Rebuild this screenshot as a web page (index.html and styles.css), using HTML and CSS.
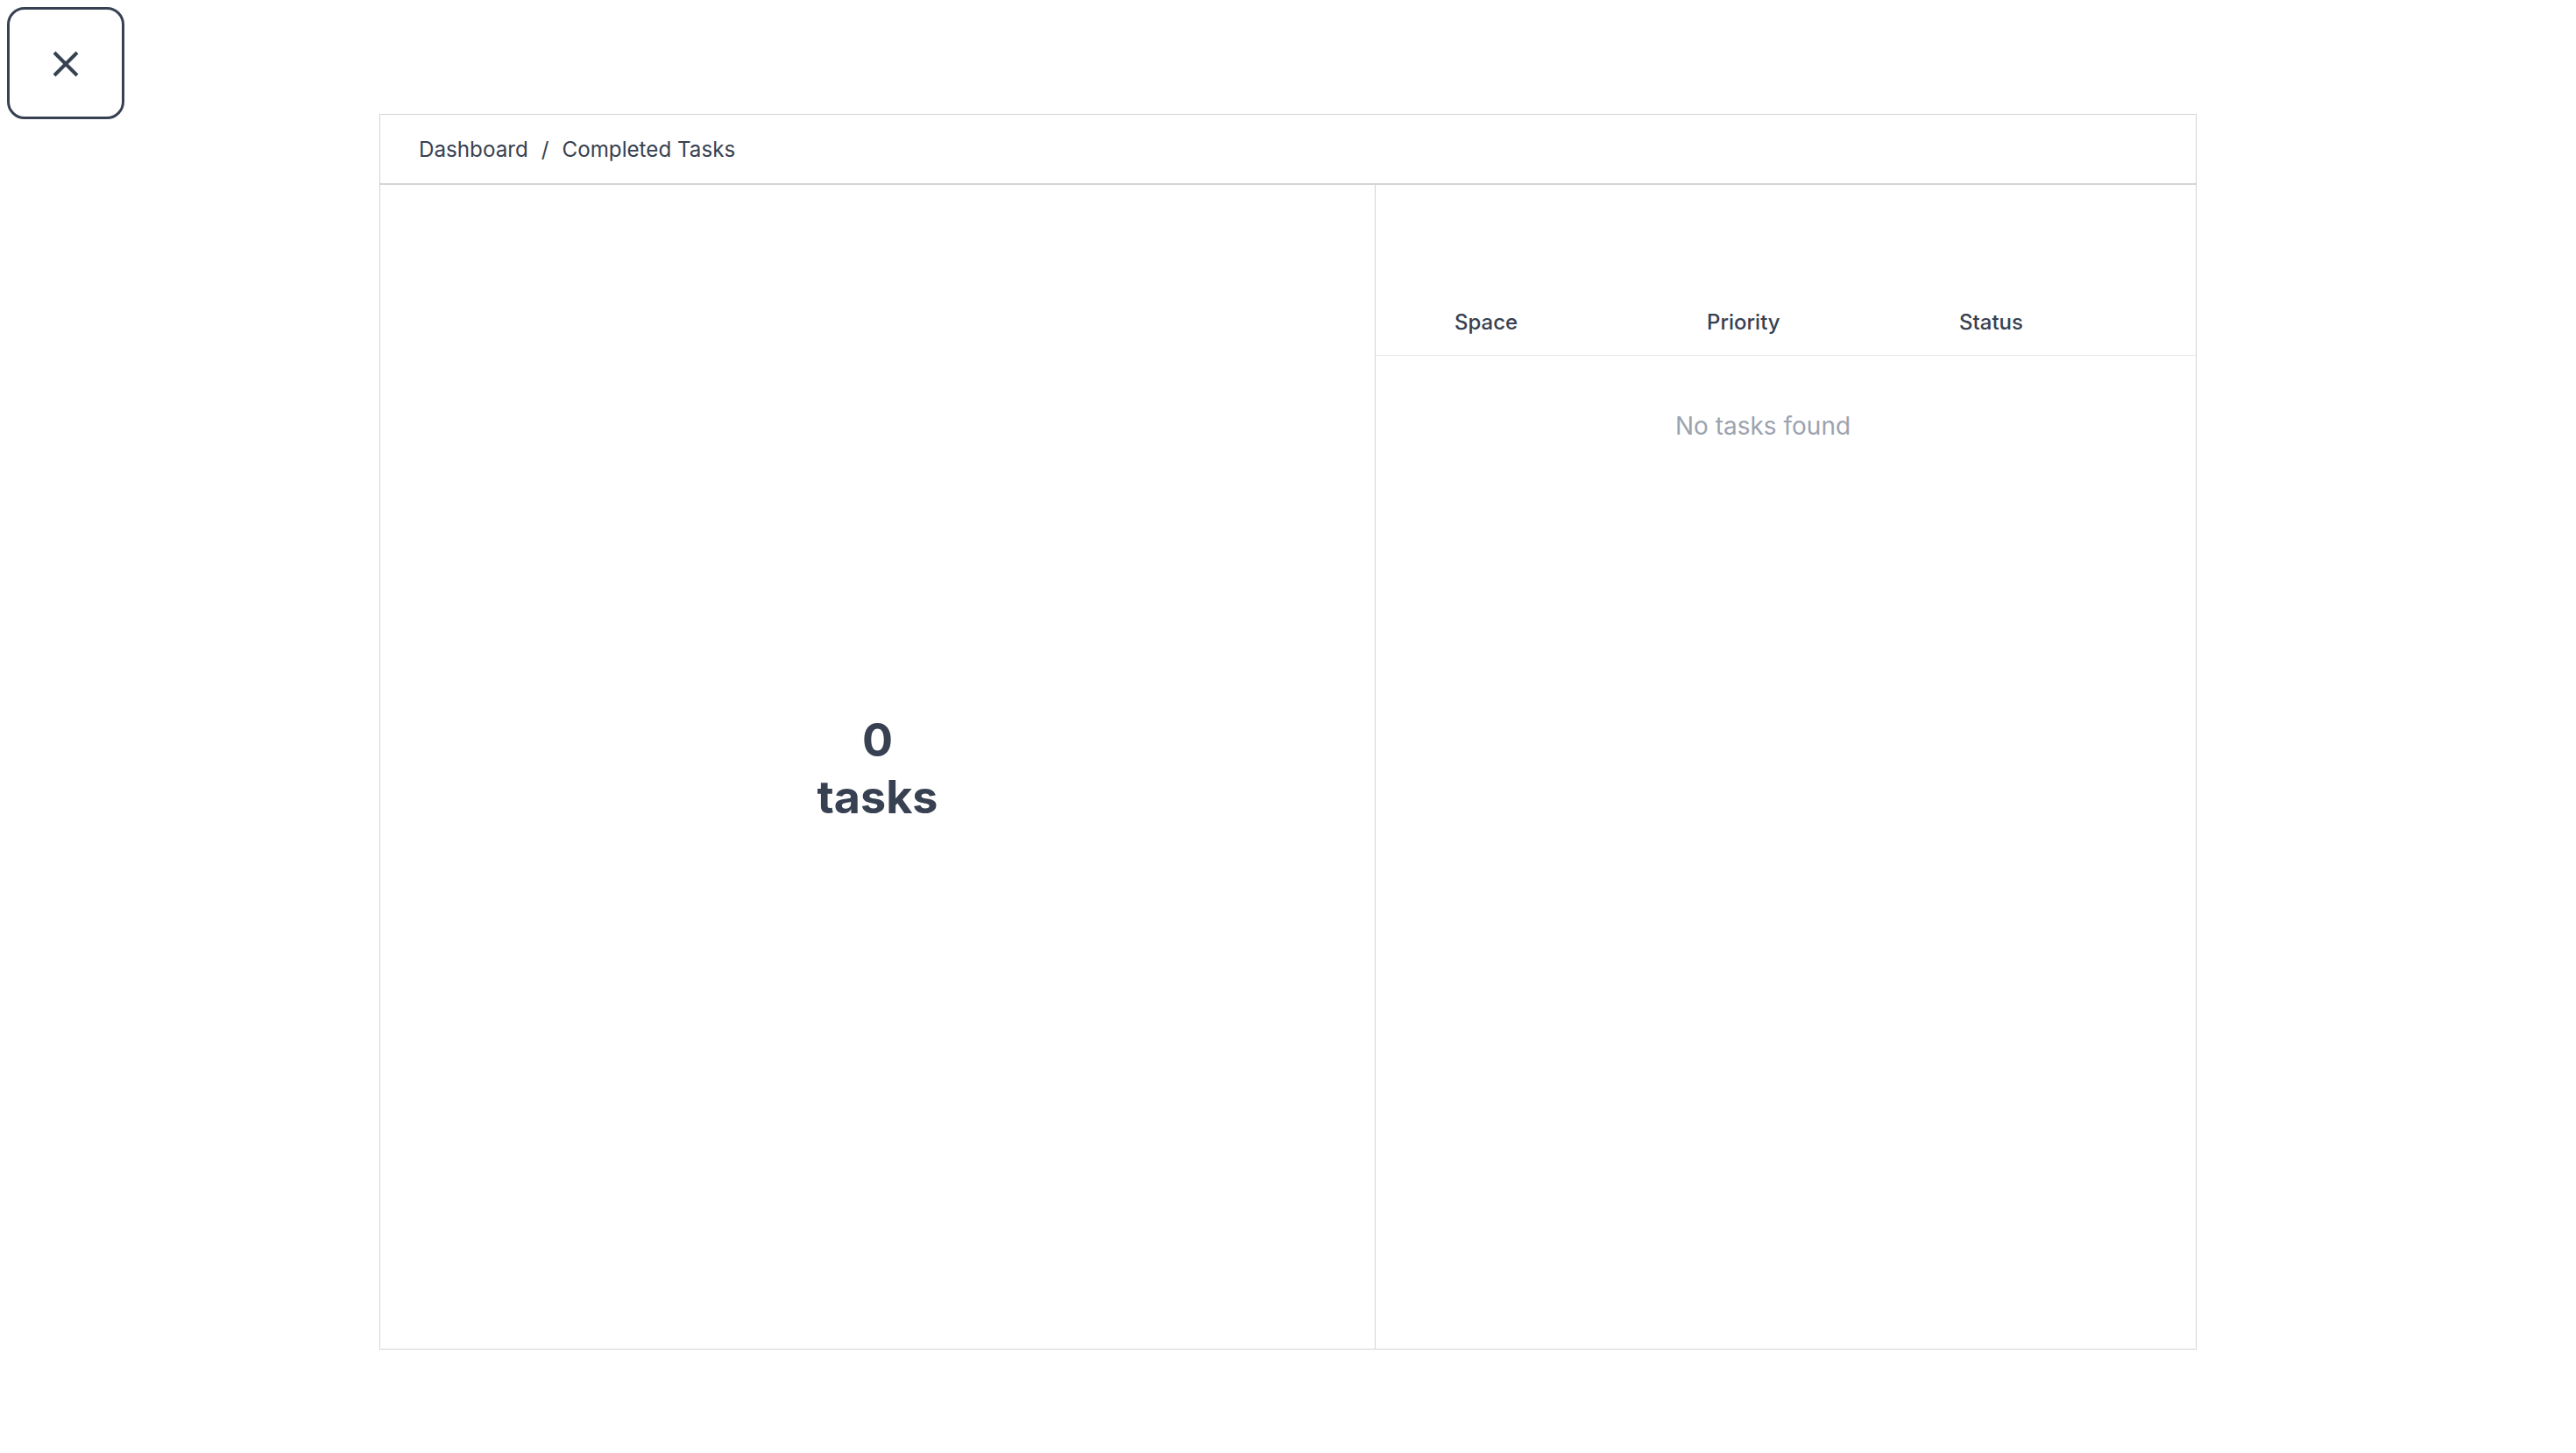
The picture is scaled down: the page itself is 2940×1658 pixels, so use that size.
FILE: index.html
```html
<!DOCTYPE html>
<html lang="en">
<head>
<meta charset="utf-8">
<title>Completed Tasks</title>
<link rel="stylesheet" href="styles.css">
</head>
<body>
<button class="close-btn" type="button" aria-label="Close">
  <svg width="32" height="32" viewBox="0 0 32 32" aria-hidden="true">
    <path d="M3 3 L29 29 M29 3 L3 29" stroke="currentColor" stroke-width="4" fill="none"/>
  </svg>
</button>
<main class="card">
  <header class="card-header">
    <nav class="breadcrumb">
      <span>Dashboard</span>
      <span class="sep">/</span>
      <span>Completed Tasks</span>
    </nav>
  </header>
  <section class="card-body">
    <div class="summary">
      <div class="count">0 tasks</div>
    </div>
    <div class="list">
      <div class="list-head">
        <div class="col">Space</div>
        <div class="col">Priority</div>
        <div class="col col-last">Status</div>
      </div>
      <div class="empty">No tasks found</div>
    </div>
  </section>
</main>
</body>
</html>
```
FILE: styles.css
```css
html, body {
  margin: 0;
  padding: 0;
  background: #ffffff;
}
body {
  font-family: Inter, "Noto Sans", "Liberation Sans", sans-serif;
  color: #374151;
  min-height: 1658px;
}
.close-btn {
  position: fixed;
  top: 8px;
  left: 8px;
  width: 134px;
  height: 128px;
  box-sizing: border-box;
  border: 3px solid #374151;
  border-radius: 20px;
  background: #ffffff;
  color: #374151;
  display: flex;
  align-items: center;
  justify-content: center;
  padding: 2px 0 0 0;
  cursor: pointer;
}
.card {
  width: 2074px;
  height: 1410px;
  box-sizing: border-box;
  margin: 130px auto 0;
  border: 1px solid #d4d4d4;
  display: flex;
  flex-direction: column;
}
.card-header {
  height: 80px;
  box-sizing: border-box;
  border-bottom: 2px solid #d4d4d4;
  display: flex;
  align-items: center;
  padding: 1px 0 0 44px;
}
.breadcrumb {
  font-size: 24.2px;
  line-height: 36px;
  color: #374151;
  display: flex;
  align-items: center;
}
.breadcrumb .sep {
  margin: 0 15px;
}
.card-body {
  flex: 1;
  display: grid;
  grid-template-columns: 1136px 1fr;
  min-height: 0;
}
.summary {
  border-right: 1px solid #d4d4d4;
  display: flex;
  align-items: center;
  justify-content: center;
}
.count {
  width: min-content;
  text-align: center;
  font-size: 52px;
  line-height: 65px;
  font-weight: 700;
  color: #374151;
  padding-top: 4px;
}
.list {
  display: flex;
  flex-direction: column;
  min-width: 0;
}
.list-head {
  display: flex;
  margin-top: 139px;
  padding: 0 0 19px 90px;
  border-bottom: 1px solid #e5e7eb;
  font-size: 24px;
  line-height: 36px;
  font-weight: 500;
  color: #374151;
}
.col {
  width: 288px;
  flex: none;
}
.col-last {
  flex: 1;
  width: auto;
}
.empty {
  margin: 60px 0 0 66px;
  width: 752px;
  text-align: center;
  font-size: 28px;
  line-height: 40px;
  color: #9ca3af;
}
```
